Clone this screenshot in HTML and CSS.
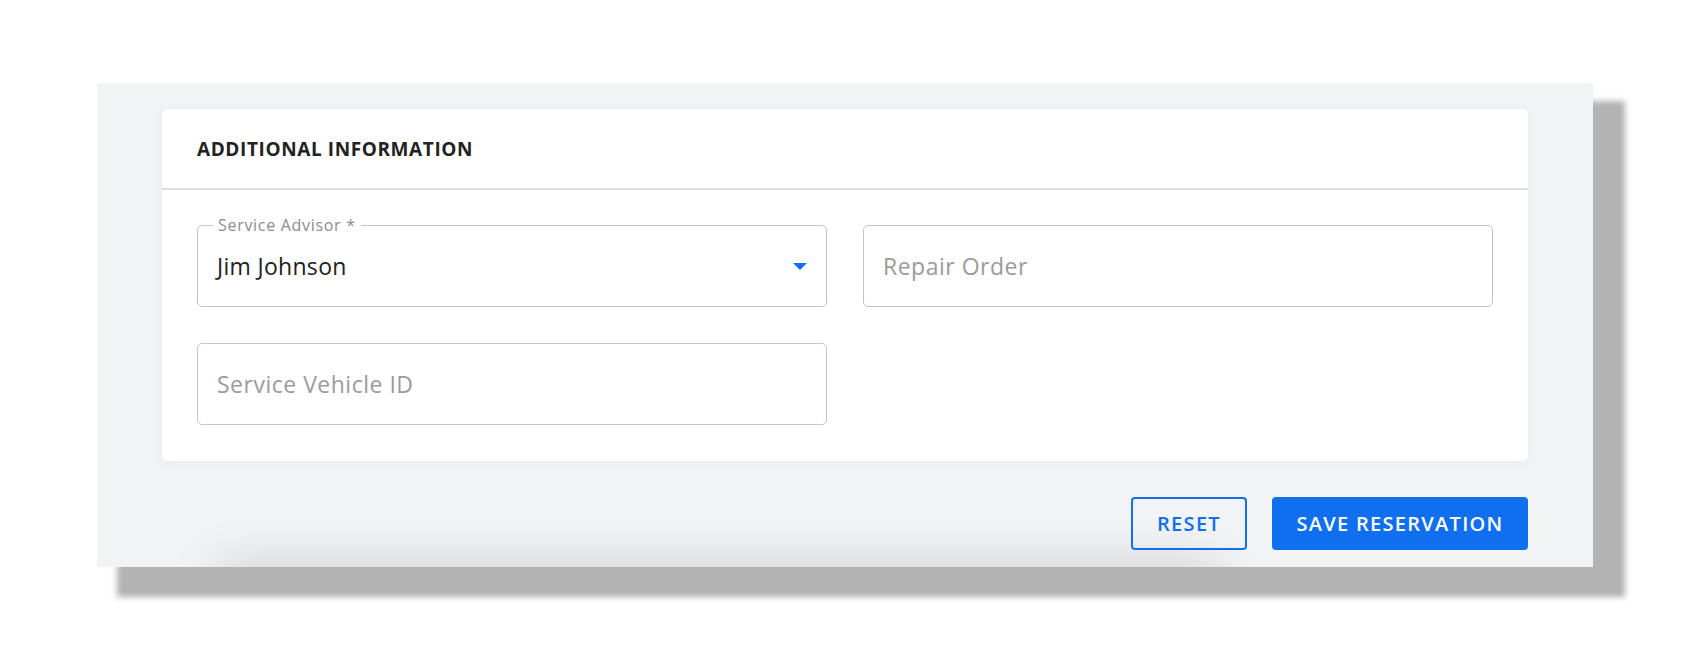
FILE: index.html
```html
<!DOCTYPE html>
<html>
  <head>
    <meta charset="UTF-8">
    <title>Additional Information</title>
    <link rel="stylesheet" href="styles.css">
  </head>
  <body>
    <div class="page">
      <div class="panel">
        <div class="card">
          <div class="card-header">ADDITIONAL INFORMATION</div>
          <div class="card-body">
            <div class="field field-filled">
              <span class="field-label">Service Advisor *</span>
              <span class="field-value">Jim Johnson</span>
              <span class="field-arrow"></span>
            </div>
            <div class="field">
              <span class="field-placeholder">Repair Order</span>
            </div>
            <div class="field">
              <span class="field-placeholder">Service Vehicle ID</span>
            </div>
          </div>
        </div>
        <div class="actions">
          <button class="btn btn-outline">RESET</button>
          <button class="btn btn-primary">SAVE RESERVATION</button>
        </div>
      </div>
    </div>
  </body>
</html>
```

FILE: styles.css
```css
html, body {
  margin: 0;
  padding: 0;
  min-height: 100%;
  background: #ffffff;
  font-family: "Open Sans", "Noto Sans", sans-serif;
}

.page {
  padding: 83px 0 96px 97px;
}

.panel {
  position: relative;
  overflow: hidden;
  width: 1496px;
  height: 484px;
  box-sizing: border-box;
  padding: 26px 65px 0 65px;
  background: #f2f3f5;
  box-shadow: 26px 24px 6px 6px #b3b3b3;
}

/* soft dark band along the bottom of the panel */
.panel::after {
  content: '';
  position: absolute;
  left: 120px;
  width: 1000px;
  top: 100%;
  height: 40px;
  box-shadow: 0 0 50px rgba(0, 0, 0, 0.17);
}

.card {
  position: relative;
  z-index: 1;
  background: #ffffff;
  border-radius: 6px;
  box-shadow: 0 2px 12px rgba(0, 0, 0, 0.04);
}

.card-header {
  height: 79px;
  display: flex;
  align-items: center;
  padding: 0 35px;
  border-bottom: 2px solid #dedede;
  font-size: 19px;
  font-weight: 700;
  letter-spacing: 0.6px;
  color: #222222;
}

.card-body {
  display: grid;
  grid-template-columns: 630px 630px;
  column-gap: 36px;
  row-gap: 36px;
  padding: 35px 35px 36px 35px;
}

.field {
  position: relative;
  height: 82px;
  box-sizing: border-box;
  border: 1px solid #c4c4c4;
  border-radius: 5px;
  display: flex;
  align-items: center;
  padding: 0 19px;
  font-size: 23px;
  letter-spacing: 0.5px;
}

.field-label {
  position: absolute;
  top: -9px;
  left: 15px;
  padding: 0 5px;
  background: #ffffff;
  font-size: 16px;
  line-height: 16px;
  letter-spacing: 0.7px;
  color: #8c8c8c;
}

.field-value {
  color: #212121;
  letter-spacing: 0.3px;
}

.field-placeholder {
  color: #9b9b9b;
}

.field-arrow {
  margin-left: auto;
  width: 0;
  height: 0;
  border-left: 7px solid transparent;
  border-right: 7px solid transparent;
  border-top: 7px solid #0f6fef;
}

.actions {
  position: relative;
  z-index: 1;
  display: flex;
  justify-content: flex-end;
  gap: 25px;
  margin-top: 36px;
}

.btn {
  height: 53px;
  box-sizing: border-box;
  padding: 0 20px;
  border-radius: 4px;
  font-family: "Open Sans", "Noto Sans", sans-serif;
  font-size: 20px;
  font-weight: 600;
  letter-spacing: 1.3px;
  cursor: pointer;
}

.btn-outline {
  width: 116px;
  background: transparent;
  border: 2px solid #0f6fef;
  color: #0f6fef;
}

.btn-primary {
  width: 256px;
  background: #0f6fef;
  border: none;
  color: #ffffff;
}
```
